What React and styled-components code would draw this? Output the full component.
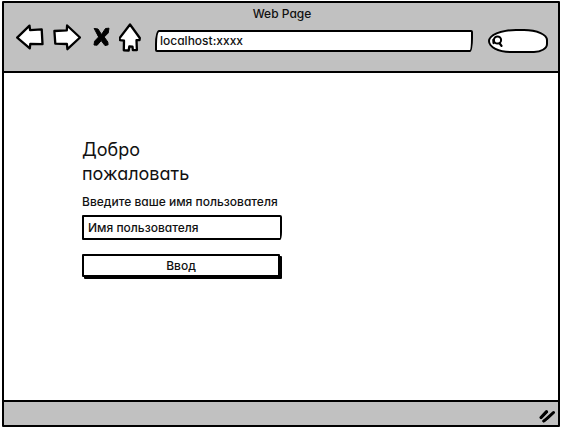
import React, { useState } from "react";
import styled, { createGlobalStyle } from "styled-components";

const Global = createGlobalStyle`
  * { box-sizing: border-box; }
  body {
    margin: 0;
    background: #fff;
    color: #111;
    font-family: Inter, "Noto Sans", sans-serif;
    font-feature-settings: "cv11" 1;
  }
  button, input { font: inherit; font-feature-settings: inherit; color: inherit; }
`;

const Page = styled.div`
  display: flex;
  min-height: 100vh;
  padding: 1px 1px 2px 2px;
`;

const Browser = styled.div`
  display: flex;
  flex: 1;
  flex-direction: column;
  border: 2px solid #000;
  border-radius: 1px;
`;

const Header = styled.header`
  background: #c1c1c1;
  border-bottom: 2px solid #000;
  padding: 3px 10px 18px 12px;
`;

const Title = styled.div`
  font-size: 12px;
  font-weight: 500;
  line-height: 16px;
  text-align: center;
`;

const Toolbar = styled.div`
  display: flex;
  align-items: center;
  gap: 12px;
  height: 31px;
`;

const Nav = styled.nav`
  display: flex;
  align-items: center;
  gap: 9px;
`;

const IconButton = styled.button`
  display: flex;
  padding: 0;
  border: 0;
  background: none;
  cursor: pointer;
`;

const Icon = styled.svg`
  display: block;
  flex: none;
  fill: #fff;
  stroke: #000;
  stroke-width: 2.3;
  stroke-linejoin: round;
  stroke-linecap: round;
`;

const Address = styled.input`
  flex: 1;
  min-width: 0;
  height: 22px;
  margin-top: 6px;
  padding: 0 3px;
  border: 2px solid #000;
  border-radius: 4px 2px 3px 2px / 14px 2px 14px 2px;
  background: #fff;
  font-size: 12px;
  font-weight: 500;
  line-height: 16px;
  outline: none;
`;

const Search = styled.label`
  display: flex;
  align-items: center;
  width: 60px;
  height: 24px;
  margin: 6px 0 0 3px;
  padding-left: 2px;
  border: 2px solid #000;
  border-radius: 28px 24px 14px 22px / 12px 11px 9px 12px;
  background: #fff;
`;

const SearchInput = styled.input`
  width: 100%;
  min-width: 0;
  padding: 0;
  border: 0;
  background: none;
  font-size: 12px;
  outline: none;
`;

const Content = styled.main`
  flex: 1;
  padding: 65px 24px 24px 78px;
`;

const Form = styled.form`
  display: flex;
  flex-direction: column;
  max-width: 200px;
`;

const Heading = styled.h1`
  margin: 0;
  max-width: 130px;
  font-size: 18px;
  font-weight: 400;
  line-height: 24px;
`;

const Label = styled.label`
  margin: 8px 0 5px;
  font-size: 12px;
  font-weight: 500;
  line-height: 16px;
  white-space: nowrap;
`;

const TextField = styled.input`
  width: 100%;
  height: 25px;
  padding: 0 4px;
  border: 2px solid #000;
  border-radius: 1px 2px 2px 1px / 1px 2px 8px 1px;
  background: #fff;
  font-size: 12px;
  font-weight: 500;
  outline: none;
  &::placeholder { color: inherit; opacity: 1; }
`;

const Submit = styled.button`
  height: 23px;
  margin: 14px 2px 0 0;
  padding: 0;
  border: 2px solid #000;
  border-radius: 1px;
  background: #fff;
  box-shadow: 2px 2px 0 #000;
  font-size: 12px;
  font-weight: 500;
  cursor: pointer;
`;

const Footer = styled.footer`
  display: flex;
  align-items: center;
  justify-content: flex-end;
  height: 25px;
  padding: 4px 3px 0 0;
  border-top: 2px solid #000;
  background: #c1c1c1;
`;

export default function App() {
  const [address, setAddress] = useState("localhost:xxxx");
  return (
    <Page>
      <Global />
      <Browser>
        <Header>
          <Title>Web Page</Title>
          <Toolbar>
            <Nav>
              <IconButton type="button" aria-label="Back">
                <Icon width="28" height="28" viewBox="0 0 28 28">
                  <path d="M1.2 13.6 13.5 1.6l.6 4.5 11.6-.8.8 14.8-12.2-.3-.5 4.6Z" />
                </Icon>
              </IconButton>
              <IconButton type="button" aria-label="Forward">
                <Icon width="28" height="28" viewBox="0 0 28 28">
                  <path d="M1.4 7 13.8 6.4l.3-4.9L27 13.5 14.4 25.2l-.5-5.2-11.6-.4Z" />
                </Icon>
              </IconButton>
              <IconButton type="button" aria-label="Stop">
                <Icon width="20" height="24" viewBox="-2 1 20 24">
                  <path fill="#000" strokeWidth="1" d="M2.5 3.5 6 4l3.5 5.5L13.5 3.5l3.5-.3-.8 4.8-4 4 3.6 5 .3 2.8-3.1.8-3.8-5L5.2 20.2l-3.2-.2.6-3.8 3.8-4Z" />
                </Icon>
              </IconButton>
              <IconButton type="button" aria-label="Home">
                <Icon width="24" height="29" viewBox="1 1 24 29">
                  <path d="M12 2.5 21.8 16l-.3 2-3 .2.4 9.8-4 .2-.4-3.5-3.2-.2-.6 4-4.9-.2.2-9.6-4-.6-.4-2Z" />
                </Icon>
              </IconButton>
            </Nav>
            <Address
              aria-label="Address"
              value={address}
              onChange={(e) => setAddress(e.target.value)}
            />
            <Search>
              <Icon width="12" height="14" viewBox="0 0 12 14">
                <circle cx="5.5" cy="6" r="3.6" strokeWidth="2" />
                <path d="M1.6 9 1.4 6M7.5 9.3l2 2.6" />
              </Icon>
              <SearchInput type="text" aria-label="Search" />
            </Search>
          </Toolbar>
        </Header>
        <Content>
          <Form onSubmit={(e) => e.preventDefault()}>
            <Heading>Добро пожаловать</Heading>
            <Label htmlFor="username">Введите ваше имя пользователя</Label>
            <TextField id="username" type="text" placeholder="Имя пользователя" />
            <Submit type="submit">Ввод</Submit>
          </Form>
        </Content>
        <Footer>
          <Icon width="16" height="14" viewBox="0 0 16 14" aria-hidden="true">
            <path d="M2 8.5 7.5 2.5M5 12l9.5-8.5" stroke="#000" strokeWidth="3" />
            <path d="M2 9 8 3M4.5 12 9 9l5-5" />
          </Icon>
        </Footer>
      </Browser>
    </Page>
  );
}
